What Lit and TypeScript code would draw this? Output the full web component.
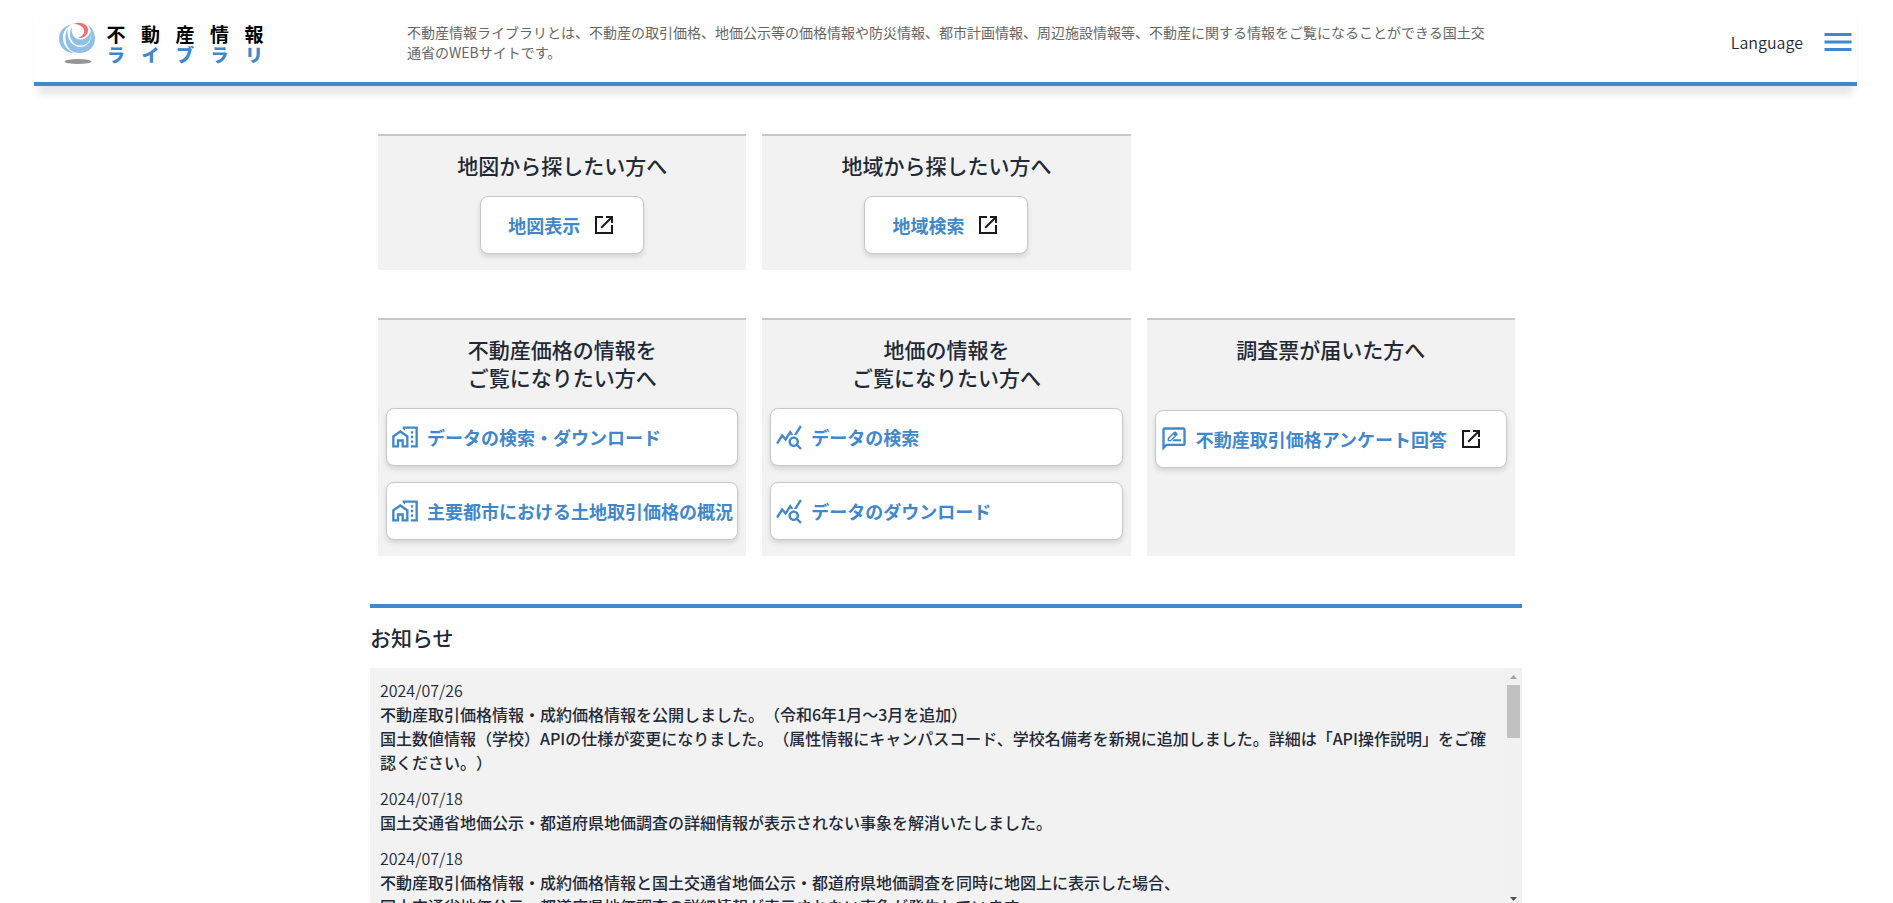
import { LitElement, html, css, svg } from "lit";
import { customElement } from "lit/decorators.js";

interface NewsEntry {
  date: string;
  lines: string[];
}

const DESCRIPTION =
  "不動産情報ライブラリとは、不動産の取引価格、地価公示等の価格情報や防災情報、都市計画情報、周辺施設情報等、不動産に関する情報をご覧になることができる国土交通省のWEBサイトです。";

const NEWS: NewsEntry[] = [
  {
    date: "2024/07/26",
    lines: [
      "不動産取引価格情報・成約価格情報を公開しました。（令和6年1月～3月を追加）",
      "国土数値情報（学校）APIの仕様が変更になりました。（属性情報にキャンパスコード、学校名備考を新規に追加しました。詳細は「API操作説明」をご確認ください。）",
    ],
  },
  {
    date: "2024/07/18",
    lines: ["国土交通省地価公示・都道府県地価調査の詳細情報が表示されない事象を解消いたしました。"],
  },
  {
    date: "2024/07/18",
    lines: [
      "不動産取引価格情報・成約価格情報と国土交通省地価公示・都道府県地価調査を同時に地図上に表示した場合、",
      "国土交通省地価公示・都道府県地価調査の詳細情報が表示されない事象が発生しています。",
    ],
  },
];

const icon = (d: string, cls: string) => html`
  <svg class=${cls} viewBox="0 0 24 24" aria-hidden="true">${svg`<path d=${d}></path>`}</svg>
`;

const OPEN_PATH =
  "M3 3h8v2H5v14h14v-7h2v9H3V3zm11 0h7v7h-2V6.4l-9.1 9.1-1.4-1.4L17.6 5H14z";
const HOME_WORK_PATH =
  "M1 11v10h6v-5h2v5h6V11L8 6l-7 5zm12 8h-2v-5H5v5H3v-7l5-3.500L13 12v7zM17 7h2v2h-2V7zm0 4h2v2h-2v-2zm0 4h2v2h-2v-2zM10 3v1.970l2 1.430V5h9v14h-4v2h6V3H10z";
const QUERY_STATS_PATH =
  "M19.880 18.470c.44-.7.7-1.510.7-2.390 0-2.490-2.010-4.500-4.500-4.500s-4.500 2.010-4.500 4.500 2.010 4.500 4.490 4.500c.88 0 1.700-.26 2.390-.7L21.580 23 23 21.580l-3.120-3.110zm-3.800.11c-1.380 0-2.500-1.120-2.500-2.500s1.120-2.500 2.500-2.500 2.500 1.120 2.500 2.500-1.120 2.500-2.500 2.500zm-.36-8.500c-.74.02-1.450.18-2.100.45l-.55-.83-3.800 6.180-3.010-3.520-3.630 5.810L1 17l5-8 3 3.500L13 6l2.720 4.080zm2.590.5c-.64-.28-1.330-.45-2.050-.49L21.380 2 23 3.180l-4.690 7.400z";
const REVIEW_PATH =
  "M20 2H4c-1.100 0-2 .9-2 2v18l4-4h14c1.100 0 2-.9 2-2V4c0-1.100-.9-2-2-2zm0 14H5.170L4 17.170V4h16v12zM12 12.200h6v1.800h-7.800zM13.700 5.900l1.200 1.200c.4.400.4 1 0 1.400L9.400 14H6.600v-2.800l5.300-5.300c.5-.5 1.300-.5 1.800 0zM7.800 12.800h1.100l3.600-3.600-1.100-1.100-3.600 3.600z";

@customElement("link-button")
export class LinkButton extends LitElement {
  static properties = {
    label: { type: String },
    lead: { type: String },
    external: { type: Boolean },
    compact: { type: Boolean, reflect: true },
  };
  declare label: string;
  declare lead: string;
  declare external: boolean;
  declare compact: boolean;

  static styles = css`
    :host {
      display: block;
    }
    :host([compact]) {
      align-self: center;
    }
    .link {
      display: flex;
      align-items: center;
      box-sizing: border-box;
      height: 58px;
      padding: 0 4px;
      border: 1px solid #c8c8c8;
      border-radius: 8px;
      background: #fff;
      box-shadow: 0 3px 5px rgba(0, 0, 0, 0.12);
      color: #4088cb;
      font-size: 18px;
      line-height: 28px;
      font-weight: 700;
      text-decoration: none;
      white-space: nowrap;
    }
    :host([compact]) .link {
      padding: 0 27px;
    }
    .lead {
      flex: none;
      width: 28px;
      height: 28px;
      margin-right: 8px;
      fill: currentColor;
    }
    .open {
      flex: none;
      width: 24px;
      height: 24px;
      margin-left: 12px;
      fill: #1a1a1a;
    }
  `;

  render() {
    return html`
      <a class="link" href="#">
        ${this.lead ? icon(this.lead, "lead") : ""}
        <span>${this.label}</span>
        ${this.external ? icon(OPEN_PATH, "open") : ""}
      </a>
    `;
  }
}

@customElement("app-root")
export class AppRoot extends LitElement {
  static styles = css`
    :host {
      display: block;
      background: #fff;
      color: #1f2937;
      font-family: "Noto Sans CJK JP", sans-serif;
      font-size: 16px;
      line-height: 24px;
      text-spacing-trim: space-all;
    }
    .header {
      display: flex;
      align-items: center;
      box-sizing: border-box;
      height: 86px;
      margin: 0 36px 0 34px;
      padding: 2px 1px 0 24px;
      border-bottom: 4px solid #4088cb;
      box-shadow: 0 12px 8px -4px rgba(0, 0, 0, 0.1);
    }
    .logo {
      display: flex;
      flex: none;
      align-items: center;
      gap: 10px;
      width: 206px;
      margin-right: 143px;
      padding-top: 3px;
      color: #000;
      text-decoration: none;
    }
    .mark {
      width: 38px;
      height: 44px;
    }
    .name {
      flex: 1;
      font-weight: 700;
    }
    .row {
      display: flex;
      justify-content: space-between;
      font-size: 19px;
      line-height: 21px;
    }
    .row span {
      width: 20px;
      text-align: center;
    }
    .kana {
      color: #4088cb;
      font-size: 18px;
      font-weight: 900;
    }
    .about {
      flex: 1;
      max-width: 1086px;
      margin: 0;
      color: #666;
      font-size: 14px;
      line-height: 20px;
    }
    .tools {
      display: flex;
      align-items: center;
      gap: 17px;
      margin-left: auto;
    }
    .language,
    .menu {
      padding: 0;
      border: 0;
      background: none;
      color: inherit;
      font: inherit;
    }
    .language {
      font-weight: 350;
    }
    .menu {
      display: flex;
      color: #4088cb;
    }
    .bars {
      width: 36px;
      height: 36px;
      fill: currentColor;
    }
    .main {
      max-width: 1153px;
      margin: 48px auto 0;
    }
    .cards {
      display: grid;
      grid-template-columns: repeat(3, 1fr);
      gap: 16px;
      margin: 0 8px 48px;
    }
    .card {
      display: flex;
      flex-direction: column;
      gap: 16px;
      padding: 15px 8px 16px;
      border-top: 2px solid #c8c8c8;
      background: #f2f2f2;
    }
    .title {
      margin: 0;
      padding-bottom: 1px;
      font-size: 21px;
      line-height: 28px;
      font-weight: 500;
      text-align: center;
    }
    .tall {
      min-height: 58px;
    }
    .news {
      max-width: 1152px;
      border-top: 4px solid #4088cb;
      padding-top: 15px;
    }
    .heading {
      margin: 0 0 17px;
      font-size: 21px;
      line-height: 28px;
      font-weight: 500;
    }
    .feed {
      display: flex;
      height: 240px;
      background: #f2f2f2;
    }
    .entries {
      flex: 1;
      box-sizing: border-box;
      margin: 0;
      padding: 10px 10px 0;
      overflow-y: auto;
      scrollbar-width: none;
    }
    .date {
      font-weight: 350;
    }
    .body {
      margin: 0 0 12px;
      font-weight: 500;
    }
    .line {
      margin: 0;
    }
    .scroll {
      display: flex;
      flex-direction: column;
      align-items: center;
      width: 17px;
      background: #f1f1f1;
    }
    .arrow {
      width: 17px;
      height: 17px;
      fill: #a3a3a3;
    }
    .down {
      margin-top: auto;
      fill: #505050;
    }
    .thumb {
      width: 13px;
      height: 53px;
      background: #c1c1c1;
    }
  `;

  render() {
    return html`
      <header class="header">
        <a class="logo" href="#" aria-label="不動産情報ライブラリ">
          <svg class="mark" viewBox="0 0 38 44" aria-hidden="true">
            <path d="M14.300 2.300C5 4 1 10 1 16.500C1 24.500 7 31 15.500 31C8 27 5 22 5 15.500C5 10 8 5 14.300 2.300Z" fill="#90c0e8"></path>
            <path d="M9.700 6.500C4 17 9 31 21.500 31C31 31 37 24.500 37 16.500C37 10.500 34 5.500 30 3C37 13 32 25 22.500 25C14 25 8.500 17 9.700 6.500Z" fill="#90c0e8"></path>
            <path d="M14 4.500C9 14 14 23.500 22.500 23.500C30 23.500 34.500 17 32.500 9C31 14.500 27 17.500 22.500 17.500C16 17.500 12.500 11.500 14 4.500Z" fill="#90c0e8"></path>
            <path d="M15.500 2C22-1 30 2 30 8C30 13 26 16.500 20 16C24.500 14 26.500 11.500 26 8.500C25.500 4.500 21 2 15.500 2Z" fill="#f07078"></path>
            <ellipse cx="20" cy="39.500" rx="13.300" ry="2.500" fill="#959595"></ellipse>
          </svg>
          <span class="name">
            <span class="row">${[..."不動産情報"].map((c) => html`<span>${c}</span>`)}</span>
            <span class="row kana">${[..."ライブラリ"].map((c) => html`<span>${c}</span>`)}</span>
          </span>
        </a>
        <p class="about">${DESCRIPTION}</p>
        <div class="tools">
          <button class="language" type="button">Language</button>
          <button class="menu" type="button" aria-label="メニュー">
            ${icon("M3 18h18v-2H3v2zm0-5h18v-2H3v2zm0-7v2h18V6H3z", "bars")}
          </button>
        </div>
      </header>

      <main class="main">
        <div class="cards">
          <section class="card">
            <h2 class="title">地図から探したい方へ</h2>
            <link-button compact external label="地図表示"></link-button>
          </section>
          <section class="card">
            <h2 class="title">地域から探したい方へ</h2>
            <link-button compact external label="地域検索"></link-button>
          </section>
        </div>

        <div class="cards">
          <section class="card">
            <h2 class="title">不動産価格の情報を<br />ご覧になりたい方へ</h2>
            <link-button .lead=${HOME_WORK_PATH} label="データの検索・ダウンロード"></link-button>
            <link-button .lead=${HOME_WORK_PATH} label="主要都市における土地取引価格の概況"></link-button>
          </section>
          <section class="card">
            <h2 class="title">地価の情報を<br />ご覧になりたい方へ</h2>
            <link-button .lead=${QUERY_STATS_PATH} label="データの検索"></link-button>
            <link-button .lead=${QUERY_STATS_PATH} label="データのダウンロード"></link-button>
          </section>
          <section class="card">
            <h2 class="title tall">調査票が届いた方へ</h2>
            <link-button external .lead=${REVIEW_PATH} label="不動産取引価格アンケート回答"></link-button>
          </section>
        </div>

        <section class="news">
          <h2 class="heading">お知らせ</h2>
          <div class="feed">
            <dl class="entries" tabindex="0">
              ${NEWS.map(
                (entry) => html`
                  <dt class="date">${entry.date}</dt>
                  <dd class="body">${entry.lines.map((line) => html`<p class="line">${line}</p>`)}</dd>
                `,
              )}
            </dl>
            <div class="scroll" aria-hidden="true">
              <svg class="arrow" viewBox="0 0 17 17"><path d="M5 11L8.500 7L12 11Z"></path></svg>
              <div class="thumb"></div>
              <svg class="arrow down" viewBox="0 0 17 17"><path d="M5 6L8.500 10L12 6Z"></path></svg>
            </div>
          </div>
        </section>
      </main>
    `;
  }
}
